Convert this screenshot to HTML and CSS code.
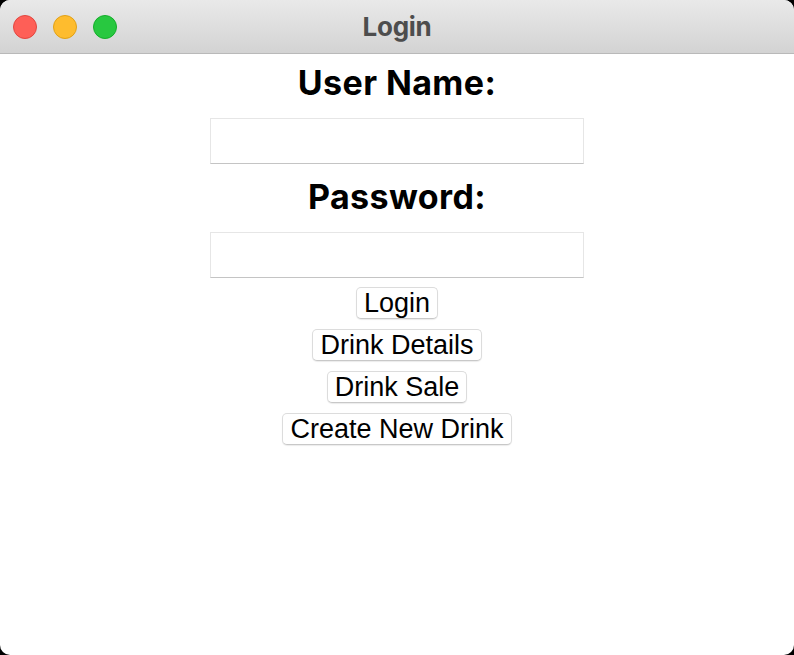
FILE: index.html
```html
<!DOCTYPE html>
<html>
<head>
<meta charset="utf-8">
<title>Login</title>
<link rel="stylesheet" href="styles.css">
</head>
<body>
<div class="window">
  <div class="titlebar">
    <div class="lights">
      <span class="light red"></span>
      <span class="light yellow"></span>
      <span class="light green"></span>
    </div>
    <div class="title">Login</div>
  </div>
  <div class="content">
    <div class="label">User Name:</div>
    <input class="field" type="text">
    <div class="label second">Password:</div>
    <input class="field" type="password">
    <div class="buttons">
      <button class="btn">Login</button>
      <button class="btn">Drink Details</button>
      <button class="btn">Drink Sale</button>
      <button class="btn">Create New Drink</button>
    </div>
  </div>
</div>
</body>
</html>
```
FILE: styles.css
```css
html, body {
  margin: 0;
  padding: 0;
  background: #000;
}
.window {
  width: 794px;
  height: 655px;
  background: #fff;
  border-radius: 10px;
  overflow: hidden;
  display: flex;
  flex-direction: column;
}
.titlebar {
  height: 53px;
  flex: none;
  background: linear-gradient(#e9e9e9, #d3d3d3);
  border-bottom: 1px solid #b9b9b9;
  position: relative;
  display: flex;
  align-items: center;
  justify-content: center;
}
.lights {
  position: absolute;
  left: 13px;
  top: 15px;
  display: flex;
  gap: 16px;
}
.light {
  width: 24px;
  height: 24px;
  border-radius: 50%;
  box-sizing: border-box;
}
.red { background: #fe5f57; border: 1px solid #e2463f; }
.yellow { background: #febc2e; border: 1px solid #e1a116; }
.green { background: #28c840; border: 1px solid #14ae2a; }
.title {
  font-family: Inter, "Liberation Sans", sans-serif;
  font-weight: 700;
  font-size: 26px;
  color: #4d4d4d;
  letter-spacing: -0.3px;
}
.content {
  display: flex;
  flex-direction: column;
  align-items: center;
  padding-top: 9px;
}
.label {
  font-family: Inter, "Liberation Sans", sans-serif;
  font-weight: 700;
  font-size: 34px;
  line-height: 40px;
  color: #000;
  letter-spacing: 0.4px;
  margin-bottom: 15px;
}
.label.second {
  margin-top: 13px;
}
.field {
  width: 374px;
  height: 46px;
  box-sizing: border-box;
  margin: 0;
  border: 1px solid #e6e6e6;
  border-bottom: 1px solid #c4c4c4;
  background: #fff;
  outline: none;
  padding: 0 8px;
}
.buttons {
  margin-top: 9px;
  display: flex;
  flex-direction: column;
  align-items: center;
  gap: 10px;
}
.btn {
  font-family: "Liberation Sans", Arial, sans-serif;
  font-size: 27px;
  line-height: 30px;
  height: 32px;
  box-sizing: border-box;
  padding: 0 7px;
  margin: 0;
  color: #000;
  background: #fff;
  border: 1px solid #dcdcdc;
  border-bottom-color: #c8c8c8;
  border-radius: 5px;
  box-shadow: 0 1px 1px rgba(0,0,0,0.08);
}
```
